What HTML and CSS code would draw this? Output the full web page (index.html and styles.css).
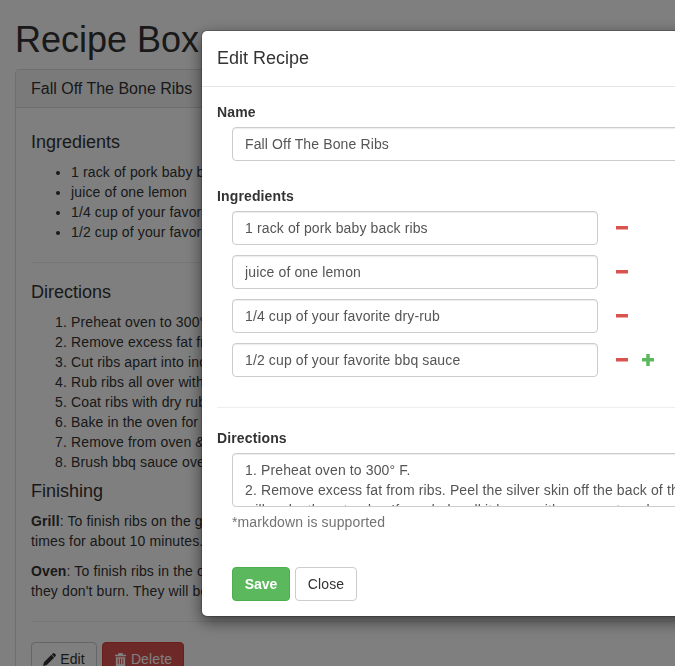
FILE: index.html
```html
<!DOCTYPE html>
<html lang="en">
<head>
<meta charset="UTF-8">
<meta name="viewport" content="width=device-width, initial-scale=1.0">
<title>Recipe Box</title>
<link rel="stylesheet" href="styles.css">
</head>
<body>
<div class="container">
  <h1>Recipe Box</h1>
  <div class="panel">
    <div class="panel-heading">Fall Off The Bone Ribs</div>
    <div class="panel-body">
      <h4>Ingredients</h4>
      <ul>
        <li>1 rack of pork baby back ribs</li>
        <li>juice of one lemon</li>
        <li>1/4 cup of your favorite dry-rub</li>
        <li>1/2 cup of your favorite bbq sauce</li>
      </ul>
      <hr>
      <h4>Directions</h4>
      <ol>
        <li>Preheat oven to 300° F.</li>
        <li>Remove excess fat from ribs.</li>
        <li>Cut ribs apart into individual pieces.</li>
        <li>Rub ribs all over with lemon juice.</li>
        <li>Coat ribs with dry rub.</li>
        <li>Bake in the oven for 3 hours.</li>
        <li>Remove from oven &amp; let rest.</li>
        <li>Brush bbq sauce over the ribs.</li>
      </ol>
      <h4>Finishing</h4>
      <p><strong>Grill</strong>: To finish ribs on the grill, brush with sauce and turn several<br>times for about 10 minutes.</p>
      <p><strong>Oven</strong>: To finish ribs in the oven, broil them and watch closely so<br>they don't burn. They will be ready to serve.</p>
      <hr>
      <div class="actions">
        <button type="button" class="btn btn-default btn-edit">
          <svg class="icon" viewBox="0 0 14 14"><path d="M0 14l1-4 8-8 3 3-8 8zM10 1l1-1q1 0 2 1l1 1q0 1-1 2l-.5.5-3-3z"/></svg>
          Edit
        </button>
        <button type="button" class="btn btn-danger btn-delete">
          <svg class="icon" viewBox="0 0 14 14"><path d="M5 0h4l1 2h3v1.500H1V2h3zM2 4.500h10V14H2zM4 6v6h1V6zm2.500 0v6h1V6zM9 6v6h1V6z" fill-rule="evenodd"/></svg>
          Delete
        </button>
      </div>
    </div>
  </div>
</div>

<div class="backdrop"></div>

<div class="modal">
  <div class="modal-header">
    <h4 class="modal-title">Edit Recipe</h4>
  </div>
  <form class="modal-body">
    <div class="form-group">
      <label for="name">Name</label>
      <input class="form-control" type="text" id="name" value="Fall Off The Bone Ribs">
    </div>
    <label>Ingredients</label>
    <div class="ingredient-row">
      <input class="form-control" type="text" value="1 rack of pork baby back ribs">
      <svg class="row-icon minus" viewBox="0 0 12 12"><rect y="4" width="12" height="3.500"/></svg>
    </div>
    <div class="ingredient-row">
      <input class="form-control" type="text" value="juice of one lemon">
      <svg class="row-icon minus" viewBox="0 0 12 12"><rect y="4" width="12" height="3.500"/></svg>
    </div>
    <div class="ingredient-row">
      <input class="form-control" type="text" value="1/4 cup of your favorite dry-rub">
      <svg class="row-icon minus" viewBox="0 0 12 12"><rect y="4" width="12" height="3.500"/></svg>
    </div>
    <div class="ingredient-row">
      <input class="form-control" type="text" value="1/2 cup of your favorite bbq sauce">
      <svg class="row-icon minus" viewBox="0 0 12 12"><rect y="4" width="12" height="3.500"/></svg>
      <svg class="row-icon plus" viewBox="0 0 12 12"><path d="M4.250 0h3.500v4h4.250v3.500H7.750V12h-3.500V7.500H0V4h4.250z"/></svg>
    </div>
    <hr class="modal-rule">
    <label for="directions">Directions</label>
    <textarea class="form-control" id="directions">1. Preheat oven to 300° F.
2. Remove excess fat from ribs. Peel the silver skin off the back of the ribs, this
will make them tender. If needed, pull it loose with a paper towel.</textarea>
    <p class="help-block">*markdown is supported</p>
    <div class="modal-footer">
      <button type="button" class="btn btn-success">Save</button>
      <button type="button" class="btn btn-default btn-close">Close</button>
    </div>
  </form>
</div>
</body>
</html>
```

FILE: styles.css
```css
html, body {
  height: 100%;
  overflow: hidden;
}

body {
  margin: 0;
  font-family: "Liberation Sans", Arial, sans-serif;
  font-size: 14px;
  line-height: 20px;
  letter-spacing: 0.13px;
  color: #333;
  background-color: #fff;
}

* {
  box-sizing: border-box;
}

.container {
  width: 970px;
  padding: 0 15px;
}

h1 {
  font-size: 36px;
  font-weight: 500;
  line-height: 39px;
  letter-spacing: 0;
  margin: 20px 0 10px;
}

h4 {
  font-size: 18px;
  font-weight: 500;
  line-height: 19px;
  letter-spacing: 0;
  margin: 10px 0;
}

hr {
  border: 0;
  border-top: 1px solid #eee;
  margin: 20px 0;
}

p {
  margin: 0 0 10px;
}

ul, ol {
  margin: 0 0 10px;
  padding-left: 40px;
}

.panel {
  border: 1px solid #ddd;
  border-radius: 4px;
  background-color: #fff;
}

.panel-heading {
  background-color: #f5f5f5;
  border-bottom: 1px solid #ddd;
  border-radius: 3px 3px 0 0;
  padding: 10px 15px;
  font-size: 16px;
  line-height: 17px;
  letter-spacing: 0;
  color: #333;
}

.panel-body {
  padding: 15px;
}

.actions {
  display: flex;
  gap: 5px;
}

.btn {
  height: 34px;
  padding: 6px 0;
  font-family: inherit;
  font-size: 14px;
  line-height: 20px;
  letter-spacing: inherit;
  border: 1px solid transparent;
  border-radius: 4px;
  cursor: pointer;
}

.btn-default {
  color: #333;
  background-color: #fff;
  border-color: #ccc;
}

.btn-danger {
  color: #fff;
  background-color: #d9534f;
  border-color: #d43f3a;
}

.btn-success {
  width: 58px;
  color: #fff;
  font-weight: bold;
  letter-spacing: 0;
  background-color: #5cb85c;
  border-color: #4cae4c;
}

.btn-edit {
  width: 66px;
}

.btn-delete {
  width: 82px;
}

.btn-close {
  width: 62px;
}

.icon {
  width: 13px;
  height: 13px;
  fill: currentColor;
  vertical-align: -2px;
}

/* overlay */
.backdrop {
  position: fixed;
  top: 0;
  right: 0;
  bottom: 0;
  left: 0;
  background-color: rgba(0, 0, 0, 0.5);
}

.modal {
  position: fixed;
  top: 30px;
  left: 201px;
  width: 600px;
  background-color: #fff;
  background-clip: padding-box;
  border: 1px solid rgba(0, 0, 0, 0.2);
  border-radius: 6px;
  box-shadow: 0 5px 15px rgba(0, 0, 0, 0.5);
}

.modal-header {
  padding: 15px;
  border-bottom: 1px solid #e5e5e5;
}

.modal-title {
  margin: 0;
  line-height: 25px;
}

.modal-body {
  padding: 15px 15px 0;
}

label {
  display: block;
  font-weight: bold;
  margin-bottom: 5px;
}

.form-group {
  margin-bottom: 25px;
}

.form-control {
  display: block;
  width: 540px;
  height: 34px;
  margin-left: 15px;
  padding: 6px 12px;
  font-family: inherit;
  font-size: 14px;
  line-height: 20px;
  letter-spacing: inherit;
  color: #555;
  background-color: #fff;
  border: 1px solid #ccc;
  border-radius: 4px;
  box-shadow: inset 0 1px 1px rgba(0, 0, 0, 0.075);
}

textarea.form-control {
  height: 54px;
  resize: vertical;
  overflow: hidden;
}

.ingredient-row {
  display: flex;
  align-items: center;
  margin-bottom: 10px;
}

.ingredient-row .form-control {
  width: 366px;
  flex: none;
}

.row-icon {
  width: 12px;
  height: 12px;
  flex: none;
}

.minus {
  margin-left: 18px;
  fill: #d9534f;
}

.plus {
  margin-left: 14px;
  fill: #5cb85c;
}

.modal-rule {
  margin: 30px 0 20px;
}

.help-block {
  margin: 5px 0 0 15px;
  color: #737373;
}

.modal-footer {
  display: flex;
  gap: 5px;
  margin-left: 15px;
  padding: 35px 0 15px;
}
```
